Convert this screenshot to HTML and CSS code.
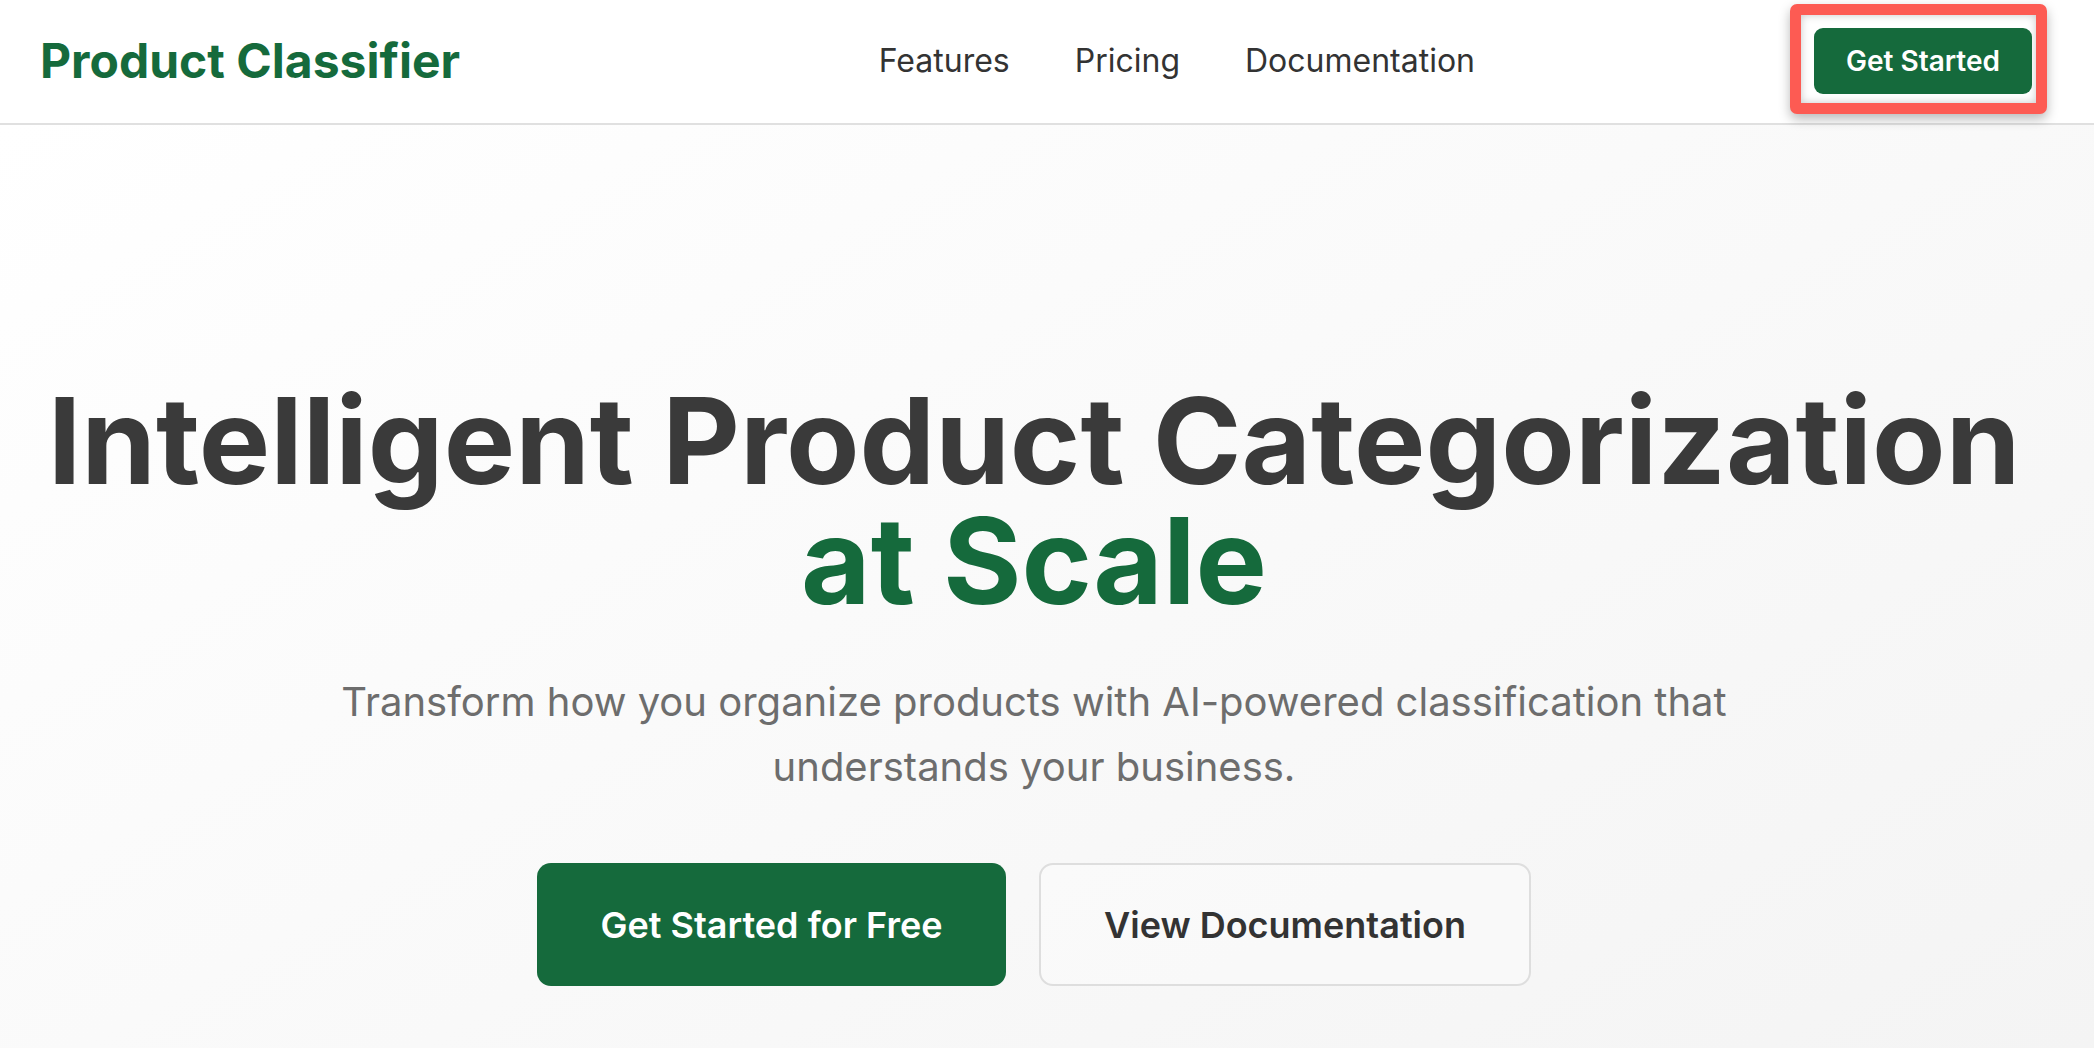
FILE: index.html
```html
<!DOCTYPE html>
<html lang="en">
<head>
<meta charset="utf-8">
<title>Product Classifier</title>
<link rel="stylesheet" href="styles.css">
</head>
<body>
<header class="site-header">
  <div class="logo">Product Classifier</div>
  <nav class="main-nav">
    <a href="#" class="nav-link">Features</a>
    <a href="#" class="nav-link">Pricing</a>
    <a href="#" class="nav-link">Documentation</a>
  </nav>
  <div class="cta-wrap">
    <a href="#" class="btn-header">Get Started</a>
    <span class="highlight"></span>
  </div>
</header>
<main class="hero">
  <h1 class="hero-title"><span class="title-line">Intelligent Product Categorization</span><span class="title-line accent">at Scale</span></h1>
  <p class="hero-sub">Transform how you organize products with AI-powered classification that understands your business.</p>
  <div class="hero-actions">
    <a href="#" class="btn btn-primary">Get Started for Free</a>
    <a href="#" class="btn btn-outline">View Documentation</a>
  </div>
</main>
</body>
</html>
```
FILE: styles.css
```css
* { box-sizing: border-box; }
html, body { margin: 0; padding: 0; }
body {
  font-family: Inter, "Noto Sans", sans-serif;
  background: #f7f7f7;
  color: #3a3a3a;
  overflow: hidden;
}
a { text-decoration: none; }

.site-header {
  height: 125px;
  display: flex;
  align-items: center;
  padding: 0 62px 3px 40px;
  background: #ffffff;
  border-bottom: 2px solid #e0e0e0;
}
.logo {
  font-size: 48px;
  font-weight: 700;
  color: #156a3c;
}
.main-nav {
  display: flex;
  gap: 65px;
  margin-left: auto;
  margin-right: 339px;
}
.nav-link {
  font-size: 32px;
  font-weight: 400;
  color: #333333;
}
.cta-wrap {
  position: relative;
  display: flex;
  top: 1px;
}
.btn-header {
  display: block;
  width: 218px;
  height: 66px;
  line-height: 66px;
  text-align: center;
  background: #156a3c;
  color: #ffffff;
  font-size: 28px;
  font-weight: 600;
  border-radius: 9px;
  position: relative;
  z-index: 1;
}
.highlight {
  position: absolute;
  left: -24px;
  top: -24px;
  right: -15px;
  bottom: -20px;
  border: 11px solid #fd5b53;
  border-radius: 7px;
  background: #ffffff;
  box-shadow: 0 5px 12px rgba(0,0,0,0.28), inset 0 0 9px rgba(0,0,0,0.22);
}

.hero {
  min-height: 923px;
  background: linear-gradient(150deg, #ffffff 0%, #f4f4f4 100%);
  padding: 256px 26px 0 0;
  text-align: center;
}
.hero-title {
  margin: 0;
  font-size: 120px;
  line-height: 120px;
  font-weight: 700;
  color: #3a3a3a;
}
.title-line { display: block; }
.accent { color: #156a3c; }
.hero-sub {
  margin: 48px auto 0;
  max-width: 1500px;
  font-size: 40px;
  line-height: 65px;
  color: #6d6d6d;
}
.hero-actions {
  margin-top: 64px;
  display: flex;
  justify-content: center;
  gap: 33px;
}
.btn {
  display: flex;
  align-items: center;
  justify-content: center;
  height: 123px;
  font-size: 36px;
  font-weight: 600;
  border-radius: 14px;
}
.btn-primary {
  width: 469px;
  background: #156a3c;
  color: #ffffff;
}
.btn-outline {
  width: 492px;
  background: rgba(255,255,255,0.3);
  color: #333333;
  border: 2px solid #dedede;
}
```
